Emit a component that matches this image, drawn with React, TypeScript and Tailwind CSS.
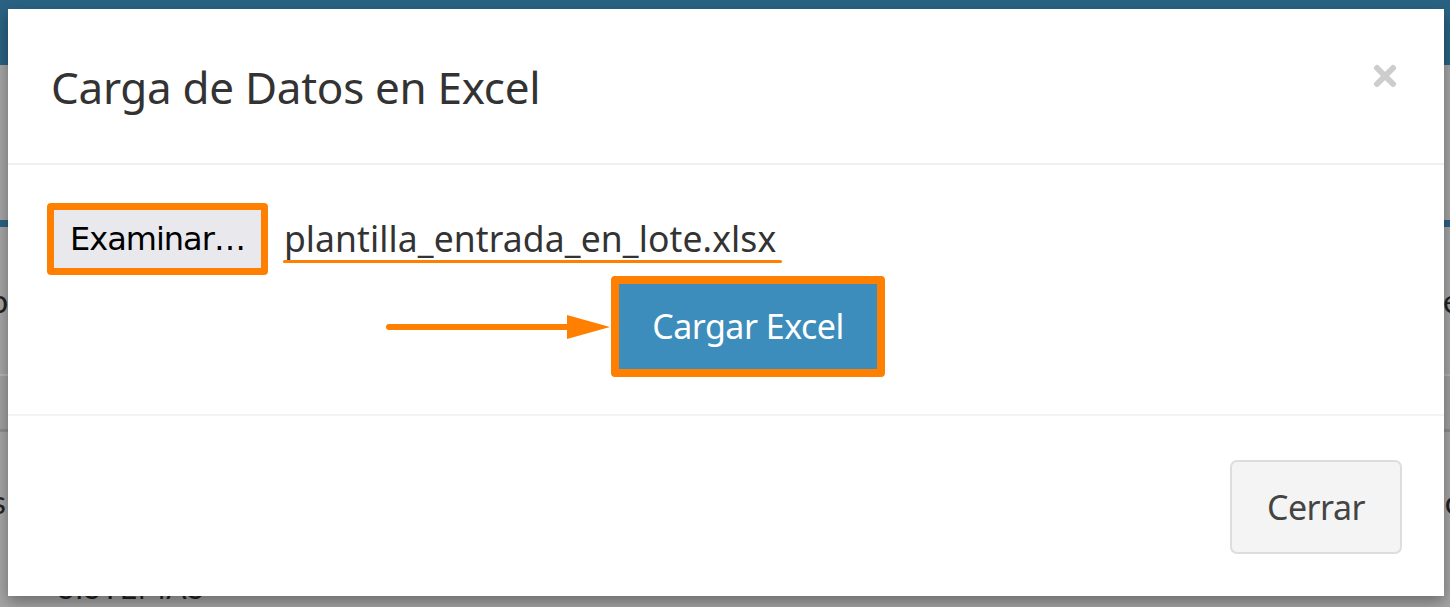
import { X } from "lucide-react";

const BackgroundPage = () => {
  return (
    <div className="flex flex-col h-full bg-[#a5a5a5] text-[#222] font-['Lato',sans-serif]">
      <div className="h-[65px] bg-[#2a6283] shrink-0"></div>
      <div className="h-[155px] shrink-0"></div>
      <div className="h-[7px] bg-[#2a6283] shrink-0"></div>
      <div className="h-[147px] shrink-0 flex items-center justify-between text-[32px] leading-none">
        <span className="-ml-[10px]">o</span>
        <span className="-mr-[10px]">e</span>
      </div>
      <div className="h-[58px] shrink-0 border-t-2 border-[#b4b4b4] border-b-[3px] border-b-[#8e8e8e] bg-[#a0a0a0]"></div>
      <div className="h-[140px] shrink-0 flex items-center justify-between text-[32px] leading-none">
        <span className="-ml-[8px]">s</span>
        <span className="-mr-[10px]">c</span>
      </div>
      <div className="pl-[58px] text-[30px] leading-none tracking-wide">SISTEMAS</div>
    </div>
  );
};

const App = () => {
  return (
    <div className="relative w-[1450px] h-[607px] overflow-hidden">
      <BackgroundPage />

      <div className="absolute left-[8px] top-[9px] w-[1436px] h-[587px] bg-white flex flex-col shadow-[0_6px_14px_rgba(0,0,0,0.35)] font-['Noto_Sans',sans-serif]">
        {/* header */}
        <div className="h-[156px] shrink-0 flex items-center justify-between pl-[43px] pr-[43px] border-b-2 border-[#f0f0f0]">
          <h4 className="text-[44px] text-[#333] leading-none mt-[2px] tracking-[-0.3px]">
            Carga de Datos en Excel
          </h4>
          <X className="w-[32px] h-[32px] text-[#cdcdcd] -mt-[20px]" strokeWidth={4.5} />
        </div>

        {/* body */}
        <div className="h-[251px] shrink-0 border-b-2 border-[#f3f3f3] pl-[39px] pt-[38px]">
          <div className="flex items-center">
            <div className="rounded-[4px] border-[7px] border-[#ff8000]">
              <div className="bg-[#e9e9ed] px-[16px] h-[58px] flex items-center text-[32px] text-black font-['DejaVu_Sans',sans-serif] tracking-[-1px]">
                Examinar…
              </div>
            </div>
            <div className="ml-[16px] flex flex-col">
              <span className="text-[35.5px] text-[#333] leading-none tracking-[0.1px] mt-[6px]">
                plantilla_entrada_en_lote.xlsx
              </span>
              <span className="h-[3px] w-[499px] bg-[#ff8000] rounded-full mt-[4px] -ml-[1px]"></span>
            </div>
          </div>
          <div className="flex items-center mt-[1px]">
            <div className="w-[339px] shrink-0"></div>
            <svg width="226" height="30" viewBox="0 0 226 30" className="shrink-0">
              <line x1="3" y1="15" x2="190" y2="15" stroke="#ff8000" strokeWidth="6" strokeLinecap="round" />
              <polygon points="181,3 224,15 181,27" fill="#ff8000" />
            </svg>
            <div className="rounded-[4px] border-[8px] border-[#ff8000] -ml-[1px]">
              <div className="bg-[#3c8dbc] w-[258px] h-[85px] flex items-center justify-center text-white text-[34px] tracking-[-0.5px]">
                Cargar Excel
              </div>
            </div>
          </div>
        </div>

        {/* footer */}
        <div className="flex-1 flex justify-end pt-[44px] pr-[42px]">
          <button className="w-[172px] h-[94px] bg-[#f4f4f4] border-2 border-[#dddddd] rounded-[7px] text-[34px] text-[#444] tracking-[-0.5px]">
            Cerrar
          </button>
        </div>
      </div>
    </div>
  );
};

export default App;
